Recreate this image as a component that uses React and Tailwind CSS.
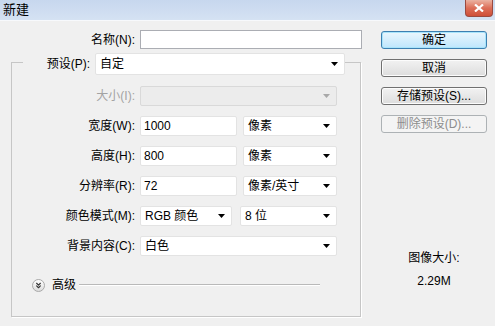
import { ChevronsDown } from 'lucide-react'

/* ── small pieces ─────────────────────────────────────────────── */

function Arrow({ disabled }) {
  return (
    <svg width="7" height="4" viewBox="0 0 7 4" className="shrink-0">
      <path d="M0 0 L7 0 L3.5 4 Z" fill={disabled ? '#a8a8a8' : '#000'} />
    </svg>
  )
}

function Combo({ value, w, h = 'h-[20px]', disabled }) {
  return (
    <div className={`${w} ${h} flex items-center justify-between pl-[4px] pr-[6px] rounded-[2px] border ${
      disabled ? 'border-[#d9d9d9] bg-[#ececec]' : 'border-[#e3e3e3] bg-white'}`}>
      <span className="text-[12px] leading-none text-black">{value}</span>
      <Arrow disabled={disabled} />
    </div>
  )
}

function Field({ value, w }) {
  return (
    <div className={`${w} h-[20px] flex items-center pl-[3px] rounded-[2px] border border-[#e3e3e3] bg-white`}>
      <span className="text-[12px] leading-none text-black">{value}</span>
    </div>
  )
}

function Row({ label, disabled, children, mt = 'mt-[10px]' }) {
  return (
    <div className={`${mt} flex items-center h-[20px]`}>
      <span className={`w-[128px] pr-[5px] text-right text-[12px] leading-none ${disabled ? 'text-[#a3a3a3]' : 'text-black'}`}>
        {label}
      </span>
      {children}
    </div>
  )
}

function Button({ children, primary, disabled }) {
  const look = primary
    ? 'border-[#3c7fb1] bg-gradient-to-b from-[#eaf6fd] to-[#bee6fd] shadow-[inset_0_0_0_1px_#a8e4fb]'
    : disabled
      ? 'border-[#adb2b5] bg-[#f4f4f4] text-[#8d8d8d]'
      : 'border-[#707070] bg-gradient-to-b from-[#f2f2f2] to-[#dddddd] shadow-[inset_0_0_0_1px_#fcfcfc]'
  return (
    <div className={`h-[18px] w-[106px] rounded-[3px] border flex items-center justify-center text-[12px] leading-none ${look}`}>
      {children}
    </div>
  )
}

/* ── dialog ───────────────────────────────────────────────────── */

export default function App() {
  return (
    <div className="w-[495px] h-[326px] overflow-hidden bg-[#f0f0f0] text-black"
      style={{ fontFamily: '"Liberation Sans", "Noto Sans CJK SC", sans-serif' }}>

      {/* title bar */}
      <div className="h-[20px] flex items-start justify-between bg-gradient-to-b from-[#c7d7ee] to-[#d5e2f3]">
        <span className="pl-[3px] text-[13px] leading-[20px]">新建</span>
        <div className="mr-[2px] w-[28px] h-[17px] rounded-b-[4px] border border-t-0 border-[#9a4a40] bg-gradient-to-b from-[#eab2a2] via-[#dc6e58] to-[#cf4f38] flex items-center justify-center">
          <svg width="10" height="8" viewBox="0 0 10 8">
            <path d="M1 0.5 L9 7.5 M9 0.5 L1 7.5" stroke="#fff" strokeWidth="2.2" />
          </svg>
        </div>
      </div>
      <div className="h-[1px] bg-[#f7f9fc]" />

      <div className="flex">
        {/* left column */}
        <div className="w-[370px]">
          <div className="mt-[9px] h-[19px] flex items-center">
            <span className="w-[140px] pr-[5px] text-right text-[12px] leading-none">名称(N):</span>
            <div className="w-[222px] h-[19px] border border-[#abadb3] bg-white" />
          </div>

          {/* group box */}
          <div className="mt-[13px] ml-[11px] w-[350px] h-[255px] border border-[#c6c6c6] shadow-[1px_1px_0_#fff]">
            <div className="-mt-[10px] flex items-center h-[22px]">
              <span className="ml-[11px] w-[72px] pr-[5px] bg-[#f0f0f0] text-right text-[12px] leading-[22px]">预设(P):</span>
              <Combo value="自定" w="w-[250px]" h="h-[22px]" />
            </div>

            <Row label="大小(I):" disabled mt="mt-[11px]">
              <Combo value="" w="w-[197px]" disabled />
            </Row>
            <Row label="宽度(W):">
              <Field value="1000" w="w-[97px]" />
              <div className="ml-[6px]"><Combo value="像素" w="w-[94px]" /></div>
            </Row>
            <Row label="高度(H):">
              <Field value="800" w="w-[97px]" />
              <div className="ml-[6px]"><Combo value="像素" w="w-[94px]" /></div>
            </Row>
            <Row label="分辨率(R):">
              <Field value="72" w="w-[97px]" />
              <div className="ml-[6px]"><Combo value="像素/英寸" w="w-[94px]" /></div>
            </Row>
            <Row label="颜色模式(M):">
              <Combo value="RGB 颜色" w="w-[92px]" />
              <div className="ml-[8px]"><Combo value="8 位" w="w-[97px]" /></div>
            </Row>
            <Row label="背景内容(C):">
              <Combo value="白色" w="w-[197px]" />
            </Row>

            {/* advanced */}
            <div className="mt-[22px] ml-[20px] flex items-center h-[14px]">
              <div className="w-[13px] h-[13px] rounded-full border border-[#a9a9a9] bg-gradient-to-b from-white to-[#dcdcdc] flex items-center justify-center">
                <ChevronsDown size={9} strokeWidth={3} color="#333" />
              </div>
              <span className="ml-[7px] text-[12px] leading-none">高级</span>
              <div className="ml-[3px] w-[241px] h-[2px] border-t border-[#b9b9b9] border-b-white border-b" />
            </div>
          </div>
        </div>

        {/* right column */}
        <div className="ml-[11px] w-[106px] flex flex-col items-center">
          <div className="mt-[10px] flex flex-col gap-[10px]">
            <Button primary>确定</Button>
            <Button>取消</Button>
            <Button>存储预设(S)...</Button>
            <Button disabled>删除预设(D)...</Button>
          </div>
          <span className="mt-[117px] text-[12px] leading-[16px]">图像大小:</span>
          <span className="mt-[7px] text-[12px] leading-[16px]">2.29M</span>
        </div>
      </div>
    </div>
  )
}
